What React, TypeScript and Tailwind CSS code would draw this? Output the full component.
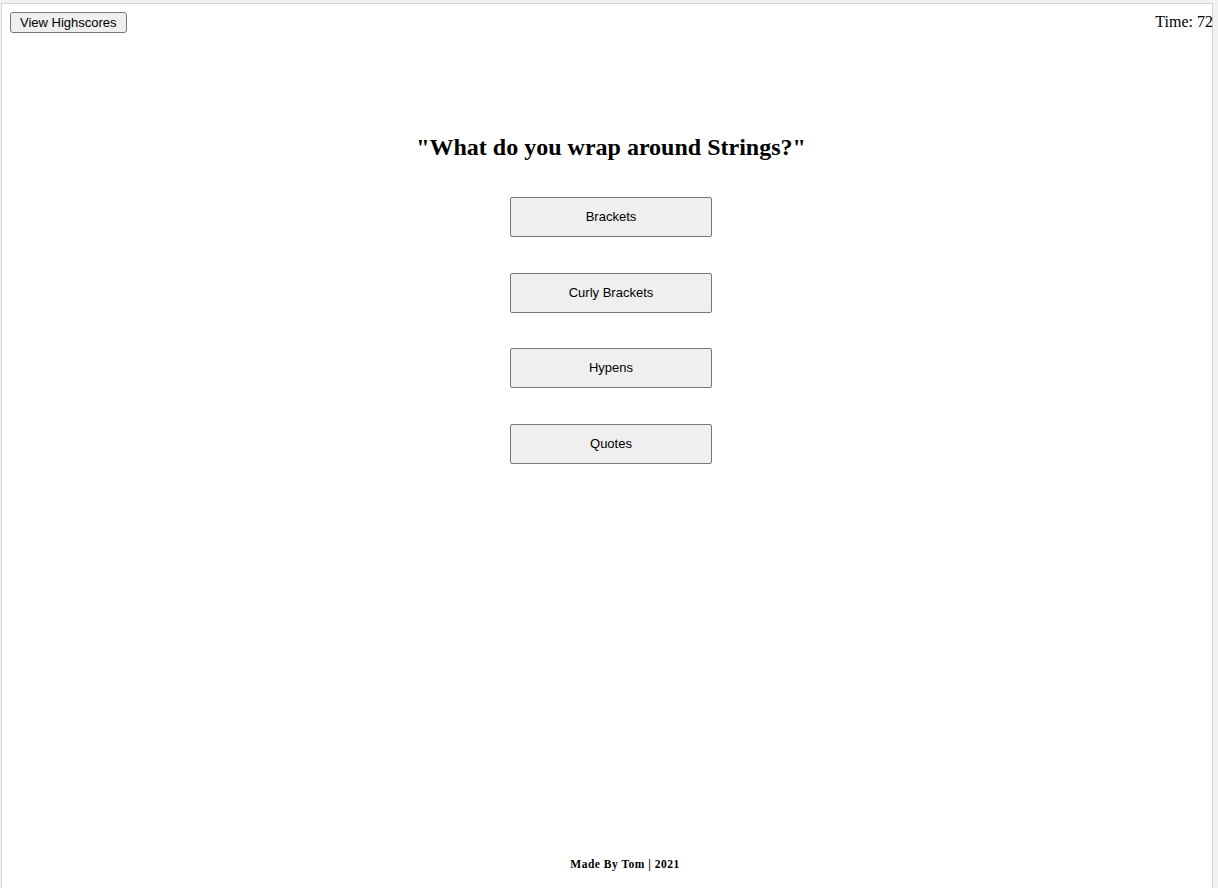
import React from 'react';

const answers = ['Brackets', 'Curly Brackets', 'Hypens', 'Quotes'];

const App: React.FC = () => {
  return (
    <div className="w-[1218px] h-[888px] overflow-hidden bg-[#f2f2f4] flex">
      <div className="mt-[3px] ml-[1px] w-[1212px] h-[900px] bg-white border border-[#d2d2d2] flex flex-col relative" style={{ fontFamily: '"Liberation Serif", serif' }}>
        <header className="flex justify-between items-start pl-[8px] pt-[8px]">
          <button className="h-[21px] px-[9px] bg-[#efefef] border border-[#767676] rounded-[3px] text-[13px] leading-none text-black" style={{ fontFamily: '"Liberation Sans", Arial, sans-serif' }}>
            View Highscores
          </button>
          <div className="text-[16px] leading-[20px] text-black -mr-[1px]">Time: 72</div>
        </header>

        <main className="flex flex-col items-center pl-[8px] mt-[100px]">
          <h2 className="text-[24px] font-bold leading-[28px] text-black">"What do you wrap around Strings?"</h2>
          <div className="flex flex-col gap-[35.5px] mt-[36px]">
            {answers.map(a => (
              <button key={a} className="w-[202px] h-[40px] bg-[#efefef] border border-[#767676] rounded-[2px] text-[13px] text-black" style={{ fontFamily: '"Liberation Sans", Arial, sans-serif' }}>
                {a}
              </button>
            ))}
          </div>
        </main>

        <footer className="absolute top-[852px] left-0 right-0 flex justify-center pl-[36px]">
          <span className="text-[11.5px] tracking-[0.5px] font-bold text-black">Made By Tom | 2021</span>
        </footer>
      </div>
    </div>
  );
};

export default App;
